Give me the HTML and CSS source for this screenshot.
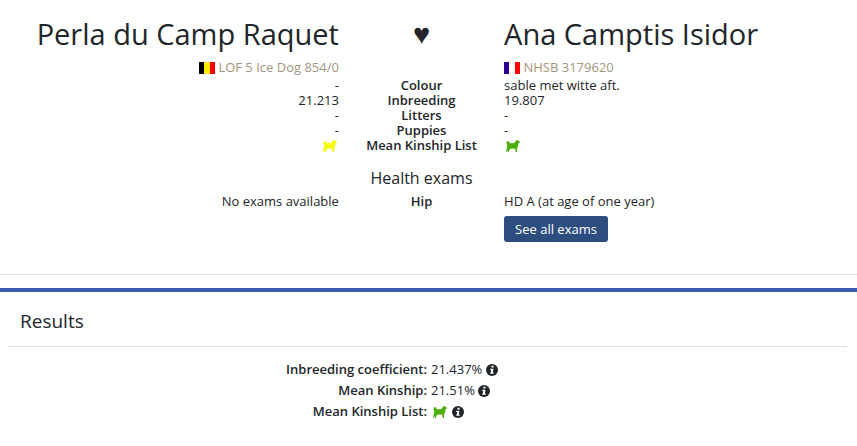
FILE: index.html
```
<!DOCTYPE html>
<html lang="en">
<head>
  <meta charset="UTF-8" />
  <meta name="viewport" content="width=device-width, initial-scale=1" />
  <title>Test mating</title>
  <link rel="stylesheet" href="styles.css">
</head>
<body>

  <!-- shared icons -->
  <svg class="sprite" aria-hidden="true">
    <symbol id="dog" viewBox="0 0 14 12">
      <path d="M.9 1.6 L2 1 L3 1.5 L3.7 3.2 L8.2 3.1 L9.4 1.7 L10.4 .1 L11.2 .6 L12.2 .3 L12.7 1.1 L14 1.8 L13.5 2.7 L12.5 3.2 L12.2 6 L11.2 7.9 L10.9 11.2 L11.3 12 L9.7 12 L9.2 8.7 L6.5 8.4 L4.3 8.7 L3.2 10 L3.1 11.2 L3.4 12 L2 12 L1.8 10 L1 11.8 L.2 11.7 L.5 9 L1.2 7.2 L1.2 4.9 L.4 3.2 Z"/>
    </symbol>
    <symbol id="info" viewBox="0 0 12 12">
      <circle cx="6" cy="6" r="6" fill="#212529"/>
      <path d="M5.4 1.7 H7.6 V3.6 H5.4 Z M4.2 4.7 H7.4 L6.8 8.4 H7.7 V9.8 H4.2 V8.4 H4.9 L5.2 6 H4.2 Z" fill="#fff"/>
    </symbol>
  </svg>

  <main class="pair">
    <header class="row">
      <div class="col father">
        <h1>Perla du Camp Raquet</h1>
        <p class="studbook"><span class="flag flag-be"></span> LOF 5 Ice Dog 854/0</p>
      </div>
      <div class="heart">♥</div>
      <div class="col">
        <h1>Ana Camptis Isidor</h1>
        <p class="studbook"><span class="flag flag-fr"></span> NHSB 3179620</p>
      </div>
    </header>

    <table class="compare">
      <colgroup>
        <col class="side">
        <col>
        <col class="side">
      </colgroup>
      <tbody>
        <tr><td>-</td><th scope="row">Colour</th><td>sable met witte aft.</td></tr>
        <tr><td>21.213</td><th scope="row">Inbreeding</th><td>19.807</td></tr>
        <tr><td>-</td><th scope="row">Litters</th><td>-</td></tr>
        <tr><td>-</td><th scope="row">Puppies</th><td>-</td></tr>
        <tr>
          <td><svg class="dog yellow"><use href="#dog"/></svg></td>
          <th scope="row">Mean Kinship List</th>
          <td><svg class="dog green"><use href="#dog"/></svg></td>
        </tr>
      </tbody>
    </table>

    <h2 class="exams-title">Health exams</h2>

    <div class="row">
      <div class="col father">No exams available</div>
      <div class="exam">Hip</div>
      <div class="col">
        HD A (at age of one year)
        <button type="button" class="btn">See all exams</button>
      </div>
    </div>
  </main>

  <section class="results">
    <h2>Results</h2>
    <dl>
      <dt>Inbreeding coefficient:</dt>
      <dd>21.437% <svg class="info"><use href="#info"/></svg></dd>
      <dt>Mean Kinship:</dt>
      <dd>21.51% <svg class="info"><use href="#info"/></svg></dd>
      <dt>Mean Kinship List:</dt>
      <dd><svg class="dog green"><use href="#dog"/></svg> <svg class="info"><use href="#info"/></svg></dd>
    </dl>
  </section>

</body>
</html>
```
FILE: styles.css
```
body {
  margin: 0;
  font-family: "Open Sans", sans-serif;
  font-size: 13px;
  line-height: 15px;
  color: #212529;
  background: #fff;
}

h1, h2, p, dl, dd {
  margin: 0;
  font-weight: 400;
}

.sprite {
  display: none;
}

.pair {
  padding: 12px 30px 32px 16px;
  border-bottom: 1px solid #ddd;
}

.row {
  display: grid;
  grid-template-columns: 5fr 2fr 5fr;
}

.col {
  min-width: 0;
  padding: 0 15px;
}

.father {
  text-align: right;
}

h1 {
  font-size: 29px;
  line-height: 44px;
  white-space: nowrap;
}

.heart {
  font-size: 29px;
  line-height: 42px;
  text-align: center;
}

.studbook {
  padding: 4px 0 3px;
  color: #a3947c;
}

.flag {
  display: inline-block;
  width: 16px;
  height: 12px;
  vertical-align: -2px;
}

.flag-be {
  background: linear-gradient(to right, #000 5px, #f8ec00 5px, #f8ec00 11px, #f00 11px);
}

.flag-fr {
  background: linear-gradient(to right, #2b008c 5px, #fff 5px, #fff 11px, #f00 11px);
}

.compare {
  width: 100%;
  table-layout: fixed;
  border-collapse: collapse;
}

.side {
  width: 41.67%;
}

.compare td {
  height: 15px;
  padding: 0 15px;
}

.compare td:first-child {
  text-align: right;
}

.compare th {
  padding: 0;
  white-space: nowrap;
}

.compare th,
.exam,
dt {
  font-weight: 600;
  text-align: center;
}

.dog {
  width: 14px;
  height: 12px;
  margin: 0 2px;
  vertical-align: -2px;
}

.yellow {
  fill: #f4ff00;
}

.green {
  fill: #4caf0b;
}

.exams-title {
  padding: 15px 0 6px;
  font-size: 16px;
  line-height: 20px;
  text-align: center;
}

.btn {
  display: block;
  margin-top: 7px;
  padding: 5px 11px;
  border: 0;
  border-radius: 3px;
  font: inherit;
  line-height: 16px;
  color: #fff;
  background: #2d4d7f;
  cursor: pointer;
}

.results {
  margin-top: 13px;
  border-top: 4px solid #3a59ae;
}

.results h2 {
  margin: 0 10px 0 8px;
  padding: 17px 12px 13px;
  border-bottom: 1px solid #ddd;
  font-size: 19px;
  line-height: 24px;
}

dl {
  display: grid;
  grid-template-columns: 1fr 1fr;
  column-gap: 4px;
  padding: 12px 0 24px 1px;
  line-height: 21px;
}

dt {
  text-align: right;
}

.info {
  width: 12px;
  height: 12px;
  vertical-align: -2px;
}
```
